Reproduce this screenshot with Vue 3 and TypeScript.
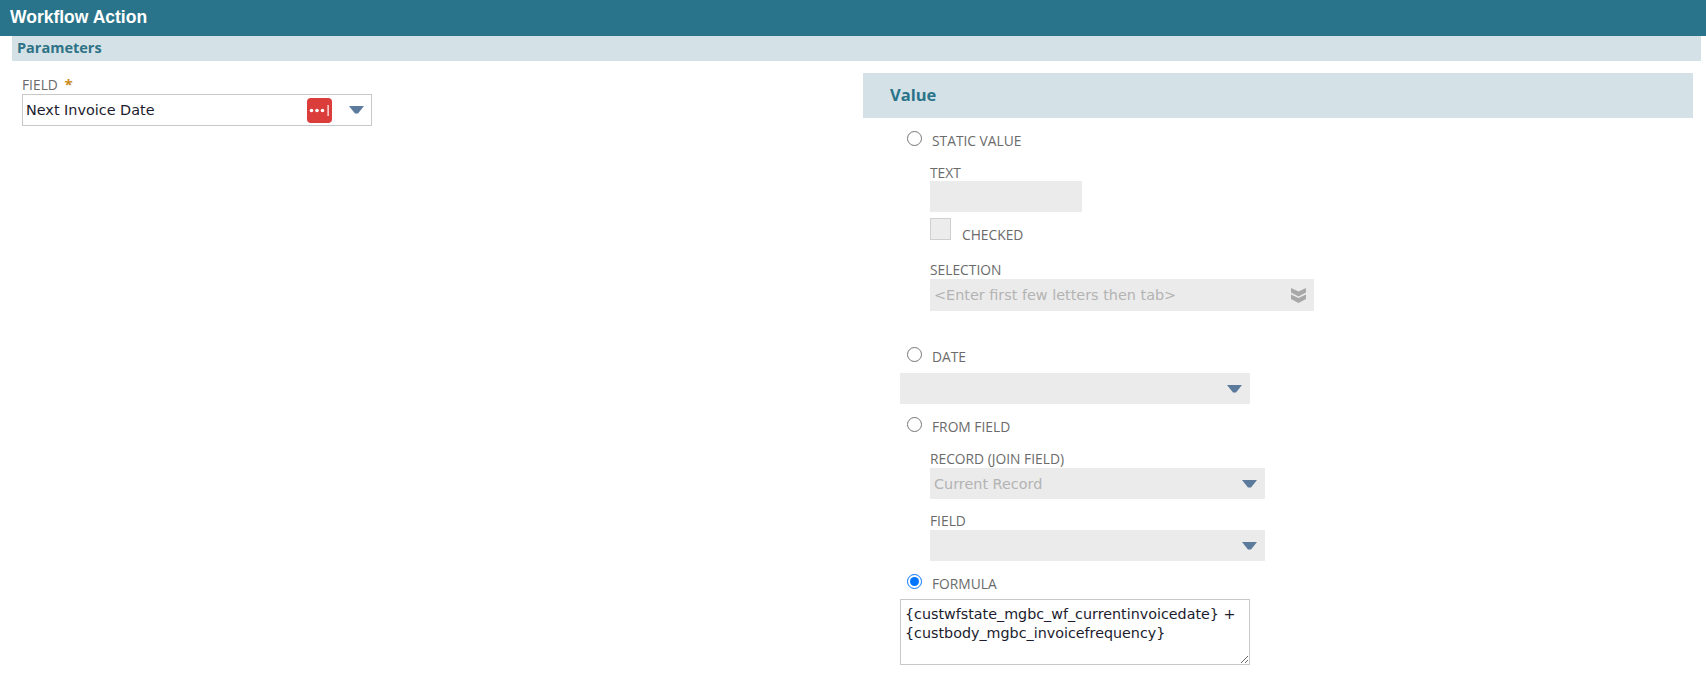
<script setup lang="ts">
const formula = '{custwfstate_mgbc_wf_currentinvoicedate} + {custbody_mgbc_invoicefrequency}'
</script>

<template>
  <div class="page">
    <header class="title">Workflow Action</header>
    <div class="params">Parameters</div>
    <main class="columns">
      <section class="left">
        <div class="label">FIELD <span class="req">*</span></div>
        <div class="main-select">
          <span class="main-text">Next Invoice Date</span>
          <span class="lp">
            <svg width="25" height="25" viewBox="0 0 25 25">
              <rect width="25" height="25" rx="4" fill="#db3d3a" />
              <circle cx="4.5" cy="12.5" r="1.8" fill="#fff" />
              <circle cx="10" cy="12.5" r="1.8" fill="#fff" />
              <circle cx="15.5" cy="12.5" r="1.8" fill="#fff" />
              <rect x="20.500" y="7" width="1.200" height="11" fill="#fff" />
            </svg>
          </span>
          <svg class="arrow" width="15" height="8" viewBox="0 0 15 8"><path d="M0 0H15L9 7.500H6Z" fill="#5c7a9c" /></svg>
        </div>
      </section>
      <section class="right">
        <div class="value-head">Value</div>
        <div class="opt first">
          <input type="radio" name="v" class="radio" />
          <span class="label">STATIC VALUE</span>
        </div>
        <div class="indent text-block">
          <div class="label">TEXT</div>
          <div class="box text-box"></div>
          <div class="check-row">
            <span class="check"></span>
            <span class="label">CHECKED</span>
          </div>
          <div class="label sel-label">SELECTION</div>
          <div class="box select-wide">
            <span>&lt;Enter first few letters then tab&gt;</span>
            <svg class="dbl" width="15" height="15" viewBox="0 0 15 15">
              <path d="M0 0L7.500 3.500L15 0V4.500L7.500 8.500L0 4.500Z" fill="#a8a8a8" />
              <path d="M0 6.500L7.500 10L15 6.500V11L7.500 15L0 11Z" fill="#a8a8a8" />
            </svg>
          </div>
        </div>
        <div class="opt date">
          <input type="radio" name="v" class="radio" />
          <span class="label">DATE</span>
        </div>
        <div class="box select-date">
          <svg class="arrow" width="15" height="8" viewBox="0 0 15 8"><path d="M0 0H15L9 7.500H6Z" fill="#5c7a9c" /></svg>
        </div>
        <div class="opt from">
          <input type="radio" name="v" class="radio" />
          <span class="label">FROM FIELD</span>
        </div>
        <div class="indent">
          <div class="label rec-label">RECORD (JOIN FIELD)</div>
          <div class="box select-mid">
            <span>Current Record</span>
            <svg class="arrow" width="15" height="8" viewBox="0 0 15 8"><path d="M0 0H15L9 7.500H6Z" fill="#5c7a9c" /></svg>
          </div>
          <div class="label field-label">FIELD</div>
          <div class="box select-mid">
            <span></span>
            <svg class="arrow" width="15" height="8" viewBox="0 0 15 8"><path d="M0 0H15L9 7.500H6Z" fill="#5c7a9c" /></svg>
          </div>
        </div>
        <div class="opt formula">
          <input type="radio" name="v" class="radio" checked />
          <span class="label">FORMULA</span>
        </div>
        <textarea class="area" :value="formula" spellcheck="false"></textarea>
      </section>
    </main>
  </div>
</template>

<style>
html, body { margin: 0; background: #fff; }
</style>

<style scoped>
.page { width: 1706px; height: 685px; overflow: hidden; font-family: "DejaVu Sans", "Noto Sans", sans-serif; }
.title {
  height: 36px; padding-left: 10px; background: #29748a; color: #fff;
  font: bold 17.5px/34px "Liberation Sans", sans-serif;
}
.params {
  margin: 0 5px 0 12px; height: 25px; padding-left: 5px; background: #d4e2e7; color: #2e7286;
  font-family: "Open Sans", sans-serif; font-size: 14.5px; font-weight: 700; line-height: 23px;
}
.columns { display: flex; }
.left { width: 863px; padding: 15px 0 0 22px; box-sizing: border-box; }
.right { width: 830px; margin-top: 12px; }
.label { font-family: "Open Sans", sans-serif; font-size: 13.8px; line-height: 16px; color: #6b6b6b; }
.req { color: #c98a1b; font-weight: 700; font-size: 15px; margin-left: 3px; }
.main-select {
  width: 350px; height: 32px; box-sizing: border-box; border: 1px solid #c8c8c8; margin-top: 1px;
  display: flex; align-items: center; padding-left: 3px; color: #1c1c2e; font-size: 14.4px;
}
.main-text { flex: 1; }
.lp { display: flex; margin-right: 17px; }
.main-select .arrow { margin-right: 7px; }
.value-head {
  height: 45px; line-height: 44px; padding-left: 27px; background: #d4e2e7; color: #29748a;
  font-family: "Open Sans", sans-serif; font-size: 16.5px; font-weight: 700;
}
.opt { display: flex; align-items: flex-start; margin-left: 44px; height: 22px; }
.radio { width: 15px; height: 15px; margin: 0 10px 0 0; flex: none; }
.opt .label { line-height: 18px; margin-top: 1px; }
.first { margin-top: 13px; }
.indent { margin-left: 67px; }
.text-block { margin-top: 12px; }
.box { background: #ebebeb; color: #b3b3b3; font-size: 14.4px; box-sizing: border-box; display: flex; align-items: center; justify-content: space-between; }
.text-box { width: 152px; height: 31px; }
.check-row { display: flex; align-items: flex-end; height: 22px; margin-top: 6px; }
.check { width: 21px; height: 22px; box-sizing: border-box; background: #ececec; border: 1px solid #cfcfcf; margin-right: 11px; }
.check-row .label { line-height: 16px; margin-bottom: -3px; }
.sel-label { margin-top: 22px; }
.select-wide { width: 384px; height: 32px; margin-top: 1px; padding: 0 8px 0 4px; }
.date { margin-top: 36px; }
.select-date { width: 350px; height: 31px; margin: 4px 0 0 37px; justify-content: flex-end; padding-right: 8px; }
.from { margin-top: 13px; }
.rec-label { margin-top: 12px; }
.select-mid { width: 335px; height: 31px; margin-top: 1px; padding: 0 8px 0 4px; }
.field-label { margin-top: 14px; }
.formula { margin-top: 13px; margin-bottom: 3px; }
.area {
  display: block; width: 350px; height: 66px; box-sizing: border-box; margin: 0 0 0 37px; padding: 5px 4px;
  border: 1px solid #c8c8c8; font: 14.3px/19px "DejaVu Sans", sans-serif; color: #1c1c2e; outline: none; border-radius: 0;
}
</style>
